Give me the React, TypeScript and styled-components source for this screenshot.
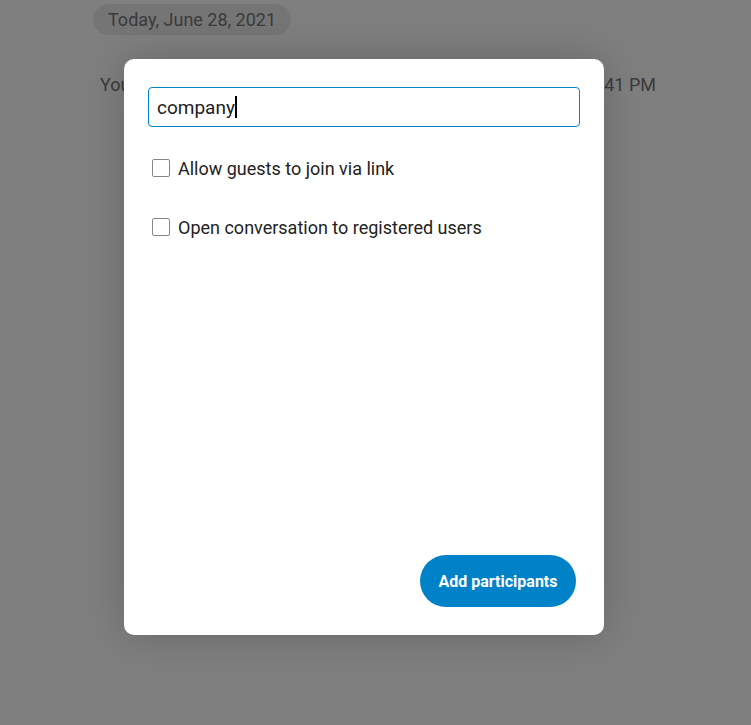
import React from "react";
import styled, { createGlobalStyle } from "styled-components";

const Global = createGlobalStyle`
  html, body { margin: 0; padding: 0; }
  body {
    font-family: Roboto, "Noto Sans", "Liberation Sans", sans-serif;
    background: #ffffff;
  }
`;

const Page = styled.div`
  position: relative;
  width: 751px;
  height: 725px;
  overflow: hidden;
  background: #ffffff;
`;

const Chat = styled.div`
  display: flex;
  flex-direction: column;
  padding: 4px 0 0 93px;
`;

const DatePill = styled.div`
  align-self: flex-start;
  height: 31px;
  padding: 0 15px;
  border-radius: 16px;
  background: #ebebeb;
  color: #767676;
  font-size: 18px;
  line-height: 31px;
`;

const MessageRow = styled.div`
  display: flex;
  justify-content: space-between;
  box-sizing: border-box;
  width: 563px;
  margin-top: 39px;
  padding-left: 7px;
  color: #767676;
  font-size: 18px;
  line-height: 22px;
`;

const Overlay = styled.div`
  position: absolute;
  inset: 0;
  background: rgba(0, 0, 0, 0.5);
  display: flex;
  align-items: flex-start;
  padding: 59px 0 0 124px;
`;

const Modal = styled.div`
  width: 480px;
  height: 576px;
  box-sizing: border-box;
  background: #ffffff;
  border-radius: 10px;
  box-shadow: 0 0 40px rgba(0, 0, 0, 0.2);
  padding: 28px 24px 28px 24px;
  display: flex;
  flex-direction: column;
`;

const FakeInput = styled.div`
  height: 40px;
  box-sizing: border-box;
  border: 1px solid #0082c9;
  border-radius: 4px;
  padding: 0 8px;
  display: flex;
  align-items: center;
  font-size: 19px;
  color: #222222;
`;

const Caret = styled.span`
  display: inline-block;
  width: 2px;
  height: 22px;
  background: #000;
`;

const Options = styled.div`
  display: flex;
  flex-direction: column;
  gap: 37px;
  margin-top: 30px;
  padding-left: 4px;
`;

const OptionRow = styled.label`
  display: flex;
  align-items: center;
  gap: 8px;
  height: 22px;
  font-size: 18px;
  color: #222222;
`;

const Box = styled.span`
  width: 18px;
  height: 18px;
  box-sizing: border-box;
  border: 1px solid #878787;
  border-radius: 2px;
  background: #fff;
`;

const Footer = styled.div`
  margin-top: auto;
  display: flex;
  justify-content: flex-end;
  padding-right: 4px;
`;

const PrimaryButton = styled.button`
  height: 52px;
  padding: 0 18.5px;
  border: none;
  border-radius: 26px;
  background: #0082c9;
  color: #ffffff;
  font-family: Roboto, "Noto Sans", sans-serif;
  font-weight: 700;
  font-size: 16px;
  cursor: pointer;
`;

export default function App() {
  return (
    <>
      <Global />
      <Page>
        <Chat>
          <DatePill>Today, June 28, 2021</DatePill>
          <MessageRow>
            <span>You created the conversation</span>
            <span>12:41 PM</span>
          </MessageRow>
        </Chat>
        <Overlay>
          <Modal>
            <FakeInput>
              company
              <Caret />
            </FakeInput>
            <Options>
              <OptionRow>
                <Box />
                Allow guests to join via link
              </OptionRow>
              <OptionRow>
                <Box />
                Open conversation to registered users
              </OptionRow>
            </Options>
            <Footer>
              <PrimaryButton>Add participants</PrimaryButton>
            </Footer>
          </Modal>
        </Overlay>
      </Page>
    </>
  );
}
